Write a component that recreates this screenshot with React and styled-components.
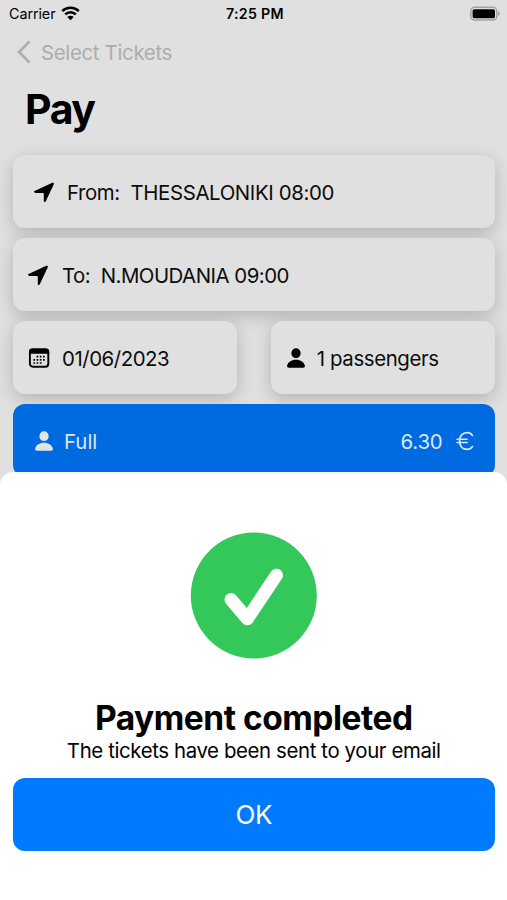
import React from "react";
import styled, { createGlobalStyle } from "styled-components";

const colors = {
  DIMMED: "#e0e0e0",
  DIMMED_BLUE: "#006be0",
  BLUE: "#007aff",
  GREEN: "#34c759",
  GREY: "#adadad",
  BLACK: "#000",
  WHITE: "#fff",
};

const GlobalStyle = createGlobalStyle`
  * {
    box-sizing: border-box;
  }

  body {
    margin: 0;
    background-color: ${colors.DIMMED};
    font-family: Inter, "Liberation Sans", sans-serif;
  }
`;

const Screen = styled.div`
  position: relative;
  width: 507px;
  height: 900px;
  overflow: hidden;
  background-color: ${colors.DIMMED};
  color: ${colors.BLACK};
`;

const StatusBar = styled.div`
  display: grid;
  grid-template-columns: 1fr auto 1fr;
  align-items: center;
  height: 27px;
  padding: 0 6px 0 9px;
  font-size: 14.4px;
`;

const Carrier = styled.div`
  display: flex;
  align-items: center;
  gap: 6px;
  letter-spacing: -0.1px;
`;

const Time = styled.span`
  font-weight: 600;
  font-size: 14.2px;
  letter-spacing: 0.3px;
`;

const BatteryIcon = styled.svg`
  justify-self: end;
  display: block;
`;

const BackLink = styled.a`
  display: flex;
  align-items: center;
  gap: 10px;
  height: 50px;
  padding-left: 17px;
  color: ${colors.GREY};
  font-size: 20.4px;
  letter-spacing: -0.32px;
`;

const Title = styled.h1`
  margin: 0;
  padding-left: 25px;
  height: 78px;
  line-height: 64px;
  font-size: 41px;
  font-weight: 700;
  letter-spacing: -1.4px;
`;

const CardList = styled.div`
  display: flex;
  flex-direction: column;
  gap: 10px;
  padding: 0 12.5px 0 13px;
`;

const CardRow = styled.div`
  display: grid;
  grid-template-columns: 1fr 1fr;
  gap: 34px;
`;

const Card = styled.div`
  display: flex;
  align-items: center;
  gap: ${({ $gap }) => $gap || 12}px;
  height: 73px;
  padding: 1px 21px 0 ${({ $indent }) => $indent || 15}px;
  border-radius: 12px;
  background-color: ${({ $blue }) =>
    $blue ? colors.DIMMED_BLUE : colors.DIMMED};
  color: ${({ $blue }) => ($blue ? "#dbe7f6" : "#0c0c0c")};
  box-shadow: ${({ $blue }) =>
    $blue ? "none" : "0 5px 18px rgba(0, 0, 0, 0.2)"};
  font-size: 20.4px;

  svg {
    flex: none;
  }
`;

const CardText = styled.span`
  white-space: pre;
  letter-spacing: ${({ $tracking }) => $tracking || 0}px;
`;

const Price = styled.span`
  display: flex;
  align-items: center;
  gap: 13px;
  margin-left: auto;
  letter-spacing: -0.2px;
`;

const Sheet = styled.div`
  position: absolute;
  left: 0;
  right: 0;
  bottom: 0;
  display: flex;
  flex-direction: column;
  align-items: center;
  height: 428px;
  padding: 60px 12.5px 0 13px;
  border-radius: 13px 13px 0 0;
  background-color: ${colors.WHITE};
`;

const SheetTitle = styled.h2`
  margin: 39px 0 0;
  line-height: 40px;
  font-size: 33.5px;
  font-weight: 700;
  letter-spacing: -0.48px;
`;

const SheetText = styled.p`
  margin: 0;
  height: 40px;
  line-height: 26px;
  font-size: 20.4px;
  letter-spacing: -0.38px;
`;

const OkButton = styled.button`
  width: 100%;
  height: 73px;
  border: 0;
  border-radius: 12px;
  background-color: ${colors.BLUE};
  color: ${colors.WHITE};
  font-family: inherit;
  font-size: 26px;
  letter-spacing: -0.5px;
`;

const WifiIcon = () => (
  <svg width="19" height="15" viewBox="0 0 19 15">
    <g fill="none" stroke="#000" strokeWidth="2.5">
      <path d="M1.2 5.2a11.8 11.8 0 0 1 16.6 0" />
      <path d="M4.2 8.4a7.5 7.5 0 0 1 10.6 0" />
    </g>
    <path d="M9.5 14.3 6.3 11a4.6 4.6 0 0 1 6.4 0z" />
  </svg>
);

const LocationIcon = () => (
  <svg width="21" height="21" viewBox="0 0 21 21">
    <path
      d="M1.100 8.800 18.300.800Q20.300.300 19.800 2.200L11.800 19.300Q10.900 20.800 9.800 19.500V11.800Q9.800 11.100 9.100 11.100L1.500 11Q-.3 10-.1 9.600 .3 9.100 1.100 8.800z"
      fill="#000"
    />
  </svg>
);

const PersonIcon = ({ fill = "#000" }) => (
  <svg width="18" height="20" viewBox="0 0 18 20">
    <ellipse cx="9" cy="5.2" rx="4.6" ry="4.9" fill={fill} />
    <path
      d="M1.800 19.700C.4 19.700-.1 18.900.1 17.800.8 14.200 4.400 11.800 9 11.800s8.200 2.400 8.900 6c.2 1.100-.3 1.900-1.700 1.900z"
      fill={fill}
    />
  </svg>
);

const CalendarIcon = () => (
  <svg width="22" height="20" viewBox="0 0 22 20">
    <rect
      x="1.9"
      y="1.400"
      width="18.400"
      height="17.400"
      rx="3"
      fill="none"
      stroke="#000"
      strokeWidth="1.9"
    />
    <path d="M1 5.800V3.700Q1 .6 4 .6h14.200q3 0 3 3.100v2.100z" />
    <g stroke="#000" strokeWidth="1.7" strokeDasharray="1.7 1.5">
      <path d="M8.600 8.600h9" />
      <path d="M5.400 11.800h12.200" />
      <path d="M5.400 15h9" />
    </g>
  </svg>
);

const EuroIcon = () => (
  <svg width="18" height="20" viewBox="0 0 18 20">
    <g fill="none" stroke="#dbe7f6" strokeWidth="1.800" strokeLinecap="round">
      <path d="M16.300 4.400C15.200 2.600 13.400 1.600 11.200 1.600 6.500 1.600 3.600 5 3.600 10s2.900 8.400 7.600 8.400c2.200 0 4-1 5.100-2.800" />
      <path d="M1 8.300h10.200M1 11.500h10.200" strokeWidth="1.500" />
    </g>
  </svg>
);

const App = () => {
  return (
    <Screen>
      <GlobalStyle />
      <StatusBar>
        <Carrier>
          Carrier
          <WifiIcon />
        </Carrier>
        <Time>7:25 PM</Time>
        <BatteryIcon width="32" height="16" viewBox="0 0 32 16">
          <rect
            x="1.8"
            y="1.3"
            width="26"
            height="12.8"
            rx="3.8"
            fill="none"
            stroke="#a3a3a3"
            strokeWidth="1.5"
          />
          <rect x="3.6" y="3.2" width="22.4" height="9" rx="1.6" />
          <path d="M29 5.3q2 1 2 2.400t-2 2.400z" fill="#a3a3a3" />
        </BatteryIcon>
      </StatusBar>

      <BackLink>
        <svg width="14" height="24" viewBox="0 0 14 24">
          <path
            d="M12.5 1.5 2 12l10.500 10.500"
            fill="none"
            stroke={colors.GREY}
            strokeWidth="2.6"
          />
        </svg>
        Select Tickets
      </BackLink>
      <Title>Pay</Title>

      <CardList>
        <Card $indent={21}>
          <LocationIcon />
          <CardText $tracking={-0.38}>From:  THESSALONIKI 08:00</CardText>
        </Card>
        <Card $gap={13}>
          <LocationIcon />
          <CardText $tracking={-0.5}>To:  N.MOUDANIA 09:00</CardText>
        </Card>
        <CardRow>
          <Card>
            <CalendarIcon />
            <CardText $tracking={-0.45}>01/06/2023</CardText>
          </Card>
          <Card $indent={16}>
            <PersonIcon />
            <CardText $tracking={-0.38}>1 passengers</CardText>
          </Card>
        </CardRow>
        <Card $blue $indent={22} $gap={11}>
          <PersonIcon fill="#e2e5e8" />
          <CardText>Full</CardText>
          <Price>
            6.30
            <EuroIcon />
          </Price>
        </Card>
      </CardList>

      <Sheet>
        <svg width="127" height="127" viewBox="0 0 127 127">
          <circle cx="63.8" cy="63.5" r="63" fill={colors.GREEN} />
          <path
            d="M41 67.500 57.300 86.800 86.500 43.200"
            fill="none"
            stroke="#fff"
            strokeWidth="13"
            strokeLinecap="round"
            strokeLinejoin="round"
          />
        </svg>
        <SheetTitle>Payment completed</SheetTitle>
        <SheetText>The tickets have been sent to your email</SheetText>
        <OkButton>OK</OkButton>
      </Sheet>
    </Screen>
  );
};

export default App;
